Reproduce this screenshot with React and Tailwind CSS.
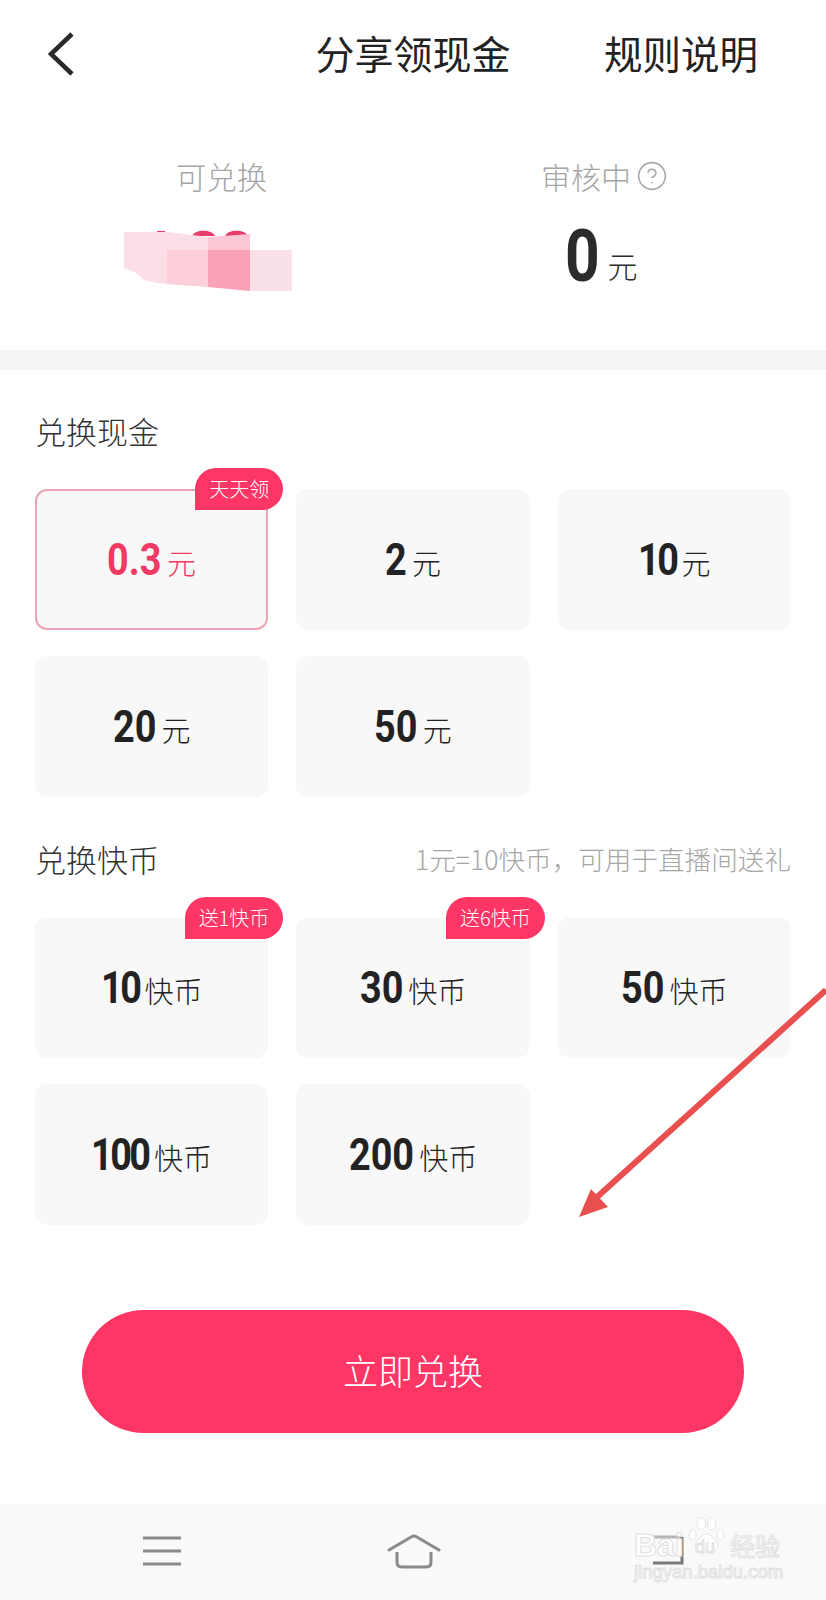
import { CircleHelp } from "lucide-react"

const cash = [
  { value: "0.3", badge: "天天领", selected: true },
  { value: "2" },
  { value: "10" },
  { value: "20" },
  { value: "50" },
]

const coins = [
  { value: "10", badge: "送1快币" },
  { value: "30", badge: "送6快币" },
  { value: "50" },
  { value: "100" },
  { value: "200" },
]

// no DIN-like narrow font here, so squeeze Roboto and give back the width
const Num = ({ value, size, className }) => {
  const leadingOne = value.startsWith("1")
  const glyphs = value.replace(".", "").length + (value.includes(".") ? 0.45 : 0)
  const width = glyphs * size * 0.5615 - (leadingOne ? 3 * value.length : 0)
  return (
    <span
      className={`inline-block origin-left scale-x-[0.84] font-['Roboto',sans-serif] font-bold ${leadingOne ? "tracking-[-3px]" : ""} ${className}`}
      style={{ marginRight: -width * 0.16 }}
    >
      {value}
    </span>
  )
}

const Card = ({ value, unit, badge, selected }) => (
  <div className={`relative h-[141px] rounded-[12px] flex items-center justify-center bg-[#f8f8f8] ${selected ? "border-2 border-[#eda3b3]" : ""}`}>
    <div className={`flex items-baseline gap-[5px] pt-[2px] ${selected ? "text-[#f03a64]" : "text-[#222222]"}`}>
      <Num value={value} size={45} className="text-[45px] leading-[50px]" />
      <span className="text-[29px] leading-[50px] font-light">{unit}</span>
    </div>
    {badge && (
      <div className={`absolute h-[42px] px-[14px] flex items-center bg-[#fe3666] text-white text-[20px] leading-none font-light rounded-t-[21px] rounded-br-[21px] ${selected ? "top-[-23px] right-[-17px]" : "top-[-20px] right-[-15px]"}`}>
        {badge}
      </div>
    )}
  </div>
)

const Watermark = () => (
  <div className="absolute left-[634px] top-[1510px] w-[150px] h-[74px] text-white font-['Liberation_Sans',sans-serif] [-webkit-text-stroke:1px_#e0e0e0]">
    <div className="absolute left-0 top-[19px] text-[32px] leading-[32px] font-bold">Bai</div>
    <svg className="absolute left-[51px] top-[2px]" width="43" height="46" viewBox="0 0 50 50" fill="#ffffff" stroke="#e0e0e0">
      <ellipse cx="9" cy="25" rx="4" ry="6" />
      <ellipse cx="19" cy="12" rx="5" ry="7" />
      <ellipse cx="31" cy="12" rx="5" ry="7" />
      <ellipse cx="41" cy="25" rx="4" ry="6" />
      <path d="M25 24c-6 0-8 5-11 8-4 4-3 12 5 12 3 0 4-1 6-1s3 1 6 1c8 0 9-8 5-12-3-3-5-8-11-8z" />
    </svg>
    <div className="absolute left-[61px] top-[27px] text-[18px] leading-[20px]">du</div>
    <div className="absolute left-[96px] top-[19px] text-[25px] leading-[32px] font-['Noto_Sans_CJK_SC',sans-serif]">经验</div>
    <div className="absolute left-0 top-[51px] text-[18.5px] leading-[22px] whitespace-nowrap">jingyan.baidu.com</div>
  </div>
)

const App = () => {
  return (
    <div className="relative w-[826px] h-[1600px] overflow-hidden bg-white font-['Noto_Sans_CJK_SC',sans-serif]">
      {/* header */}
      <div className="h-[108px] pb-[4px] grid grid-cols-3 items-center text-[#222222] leading-[50px]">
        <div className="pl-[46px] pt-[4px]">
          <svg width="32" height="46" viewBox="0 0 32 46" fill="none" stroke="#2a2a2a" strokeWidth="4.5">
            <path d="M26 3 L5 23 L26 43" />
          </svg>
        </div>
        <div className="text-center text-[39px] whitespace-nowrap">分享领现金</div>
        <div className="text-right text-[38.5px] pr-[68px] whitespace-nowrap">规则说明</div>
      </div>

      {/* balance */}
      <div className="h-[242px] pt-[48px] px-[30px] grid grid-cols-2">
        <div className="flex flex-col items-center">
          <div className="text-[30.5px] leading-[40px] text-[#a6a6a6] font-light">可兑换</div>
          <svg className="mt-[25px]" width="200" height="72" viewBox="122 221 200 72">
            <path d="M157 231h8v3h-8zM192 236c3-7 20-7 23 0zM225 236c3-7 20-7 23 0z" fill="#ea3c68" />
            <path d="M124 232h44l40 5v48l-41-1-10-1-13-3-8-7-12-5z" fill="#fcdfe6" />
            <path d="M167 250h41v37l-41-3z" fill="#fccfdb" />
            <path d="M208 237l42-3v16h-42z" fill="#fdc8d5" />
            <path d="M208 250h42v41l-42-4z" fill="#f9a1b7" />
            <path d="M250 250h42v41h-42z" fill="#fae0e7" />
          </svg>
        </div>
        <div className="flex flex-col items-center">
          <div className="flex items-center gap-[5px] text-[30px] leading-[40px] text-[#a6a6a6] font-light">
            审核中
            <CircleHelp size={32} strokeWidth={1.2} color="#aaaaaa" />
          </div>
          <div className="mt-[26px] pr-[7px] flex items-baseline gap-[8px] text-[#2b2b2b] h-[70px]">
            <Num value="0" size={72} className="text-[72px] leading-[70px]" />
            <span className="text-[30px] leading-[70px] font-light -translate-y-[3px]">元</span>
          </div>
        </div>
      </div>

      <div className="h-[20px] bg-[#f4f4f4]" />

      {/* options */}
      <div className="pt-[41px] px-[35px]">
        <div className="text-[31px] leading-[40px] text-[#333333] font-light">兑换现金</div>
        <div className="mt-[38px] grid grid-cols-3 gap-x-[28px] gap-y-[26px]">
          {cash.map((item) => (
            <Card key={item.value} {...item} unit="元" />
          ))}
        </div>

        <div className="mt-[42px] flex items-center justify-between">
          <div className="text-[31px] leading-[40px] text-[#333333] font-light">兑换快币</div>
          <div className="text-[26.6px] leading-[40px] text-[#a6a6a6] font-light whitespace-nowrap">1元=10快币，可用于直播间送礼</div>
        </div>
        <div className="mt-[38px] grid grid-cols-3 gap-x-[28px] gap-y-[26px]">
          {coins.map((item) => (
            <Card key={item.value} {...item} unit="快币" />
          ))}
        </div>

        <div className="mt-[85px] mx-[47px] h-[123px] pb-[3px] rounded-full bg-[#fe3666] flex items-center justify-center text-white text-[35px] font-light">
          立即兑换
        </div>
      </div>

      {/* system nav */}
      <div className="mt-[71px] h-[96px] bg-[#f9f9f9] flex items-start pl-[143px] pt-[30px]">
        <svg width="38" height="32" viewBox="0 0 38 32" fill="none" stroke="#8a8a8a" strokeWidth="3">
          <path d="M0 4h38M0 17h38M0 30h38" />
        </svg>
        <svg className="ml-[206px]" width="54" height="36" viewBox="0 0 54 36" fill="none" stroke="#8a8a8a" strokeWidth="3">
          <path d="M2 16 L25 2.5 Q27 1.5 29 2.5 L52 16" strokeLinecap="round" strokeLinejoin="round" />
          <path d="M10 18 V28 Q10 33 15 33 H39 Q44 33 44 28 V18" />
        </svg>
        <svg className="ml-[211px]" width="34" height="32" viewBox="0 0 34 32" fill="none" stroke="#7a7a7a" strokeWidth="3">
          <path d="M1 3 H30" stroke="#b5b5b5" />
          <path d="M30 3 V29 H1" />
        </svg>
      </div>

      <Watermark />

      {/* red annotation arrow */}
      <svg className="absolute left-0 top-0 pointer-events-none" width="826" height="1600" viewBox="0 0 826 1600">
        <path d="M826 990 L596 1198" stroke="#ea4f4f" strokeWidth="6" fill="none" />
        <path d="M579 1217 L591 1189 L608 1207 Z" fill="#ea4f4f" />
      </svg>
    </div>
  )
}

export default App
